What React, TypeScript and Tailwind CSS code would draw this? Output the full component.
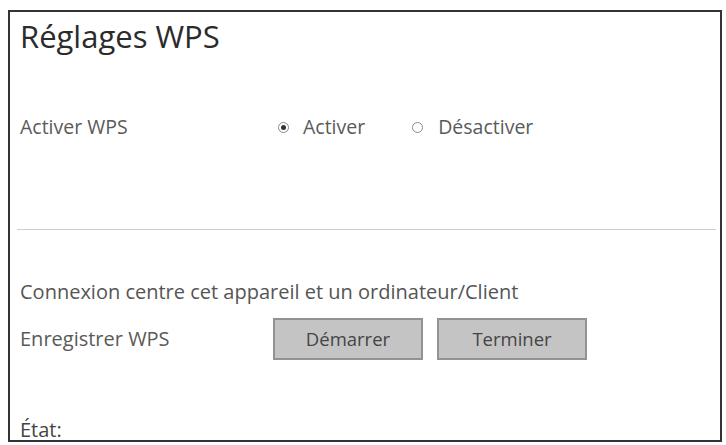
import React from 'react';

function Radio({ checked }: { checked?: boolean }) {
  return (
    <span className="inline-flex h-[11px] w-[11px] items-center justify-center rounded-full border border-[#8a8a8a] bg-white">
      {checked && <span className="h-[5px] w-[5px] rounded-full bg-[#333]" />}
    </span>
  );
}

function GrayButton({ label }: { label: string }) {
  return (
    <button className="h-[42px] w-[150px] border-2 border-[#929292] bg-[#c4c4c4] text-[18.5px] font-medium text-[#454545]">
      {label}
    </button>
  );
}

export default function App() {
  return (
    <div className="h-[445px] w-[726px] bg-white font-['Open_Sans',sans-serif]">
      <div className="ml-[8px] pt-[10px]">
        <div className="h-[432px] w-[714px] overflow-hidden border-2 border-[#333]">
          {/* header */}
          <h1 className="ml-[10px] mt-[4px] text-[31px] leading-[40px] text-[#2b2b2b]">Réglages WPS</h1>

          <div className="ml-[10px] mt-[59px] flex h-[24px] items-center text-[19.5px] text-[#5a5a5a]">
            <span className="w-[258px]">Activer WPS</span>
            <label className="flex items-center gap-[14px]">
              <Radio checked />
              Activer
            </label>
            <label className="ml-[47px] flex items-center gap-[15px]">
              <Radio />
              Désactiver
            </label>
          </div>

          <div className="ml-[7px] mr-[4px] mt-[90px] h-px bg-[#cfcfcf]" />

          {/* WPS registration */}
          <p className="ml-[10px] mt-[49px] text-[20px] leading-[26px] text-[#555]">
            Connexion centre cet appareil et un ordinateur/Client
          </p>
          <div className="ml-[10px] mt-[13px] flex items-center text-[20px] text-[#5a5a5a]">
            <span className="w-[253px]">Enregistrer WPS</span>
            <div className="flex gap-[14px]">
              <GrayButton label="Démarrer" />
              <GrayButton label="Terminer" />
            </div>
          </div>

          <p className="ml-[10px] mt-[56px] text-[20px] leading-[28px] text-[#444]">État:</p>
        </div>
      </div>
    </div>
  );
}
